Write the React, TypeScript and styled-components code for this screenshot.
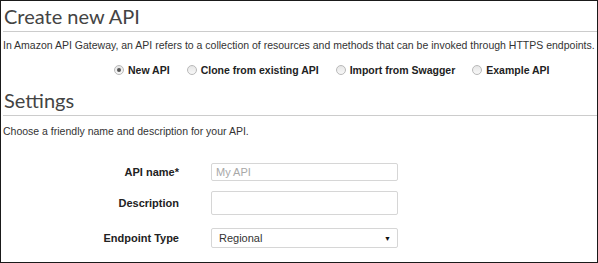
import styled, { createGlobalStyle } from 'styled-components';

const GlobalStyle = createGlobalStyle`
  html, body {
    margin: 0;
    padding: 0;
    background: #fff;
  }
  * {
    box-sizing: border-box;
  }
`;

const Page = styled.div`
  width: 598px;
  height: 263px;
  border: 1px solid #1a1a1a;
  padding: 0 0 0 2px;
  overflow: hidden;
  font-family: 'Liberation Sans', Arial, sans-serif;
  color: #333;
`;

const SectionTitle = styled.h2<{ $top: number }>`
  margin: ${(p) => p.$top}px 0 0 1px;
  font-family: Lato, 'Open Sans', sans-serif;
  font-weight: 400;
  font-size: 20px;
  line-height: 24px;
  color: #444;
`;

const Divider = styled.hr`
  margin: 3px 0 0 0;
  border: none;
  border-top: 1px solid #ccc;
  height: 0;
`;

const Note = styled.p<{ $top: number }>`
  margin: ${(p) => p.$top}px 0 0 0;
  font-size: 10.5px;
  line-height: 14px;
  white-space: nowrap;
  color: #333;
`;

const RadioRow = styled.div`
  display: flex;
  align-items: center;
  gap: 17px;
  margin: 11px 0 0 111px;
`;

const RadioOption = styled.label`
  display: flex;
  align-items: center;
  gap: 4px;
  font-size: 10.5px;
  font-weight: 700;
  line-height: 14px;
  color: #222;
`;

const RadioDot = styled.span<{ $checked?: boolean }>`
  position: relative;
  width: 10px;
  height: 10px;
  border-radius: 50%;
  border: 1px solid #b9b9b9;
  background: linear-gradient(#e6e6e6, #f8f8f8);

  &::after {
    content: '';
    display: ${(p) => (p.$checked ? 'block' : 'none')};
    position: absolute;
    left: 2px;
    top: 2px;
    width: 4px;
    height: 4px;
    border-radius: 50%;
    background: #555;
  }
`;

const Form = styled.div`
  display: grid;
  grid-template-columns: 176px 187px;
  column-gap: 32px;
  margin-top: 25px;
`;

const FieldLabel = styled.div<{ $gap: number }>`
  justify-self: end;
  align-self: center;
  margin-top: ${(p) => p.$gap}px;
  font-size: 11px;
  font-weight: 700;
  color: #222;
`;

const TextBox = styled.div<{ $h: number; $gap: number; $placeholder?: boolean }>`
  height: ${(p) => p.$h}px;
  margin-top: ${(p) => p.$gap}px;
  border: 1px solid #d6d6d6;
  border-radius: 2px;
  padding: 0 4px;
  display: flex;
  align-items: center;
  font-size: 11px;
  color: ${(p) => (p.$placeholder ? '#a8a8a8' : '#333')};
`;

const Select = styled(TextBox)`
  justify-content: space-between;
  padding: 0 6px 0 7px;
`;

const Caret = styled.span`
  font-size: 7px;
  color: #111;
`;

const options = ['New API', 'Clone from existing API', 'Import from Swagger', 'Example API'];

export default function App() {
  return (
    <>
      <GlobalStyle />
      <Page>
        <SectionTitle $top={3}>Create new API</SectionTitle>
        <Divider />
        <Note $top={6}>
          In Amazon API Gateway, an API refers to a collection of resources and methods that can be invoked
          through HTTPS endpoints.
        </Note>
        <RadioRow>
          {options.map((o, i) => (
            <RadioOption key={o}>
              <RadioDot $checked={i === 0} />
              {o}
            </RadioOption>
          ))}
        </RadioRow>
        <SectionTitle $top={11}>Settings</SectionTitle>
        <Divider />
        <Note $top={8}>Choose a friendly name and description for your API.</Note>
        <Form>
          <FieldLabel $gap={0}>API name*</FieldLabel>
          <TextBox $h={18} $gap={0} $placeholder>
            My API
          </TextBox>
          <FieldLabel $gap={10}>Description</FieldLabel>
          <TextBox $h={24} $gap={10} />
          <FieldLabel $gap={13}>Endpoint Type</FieldLabel>
          <Select $h={20} $gap={13}>
            Regional
            <Caret>▼</Caret>
          </Select>
        </Form>
      </Page>
    </>
  );
}
